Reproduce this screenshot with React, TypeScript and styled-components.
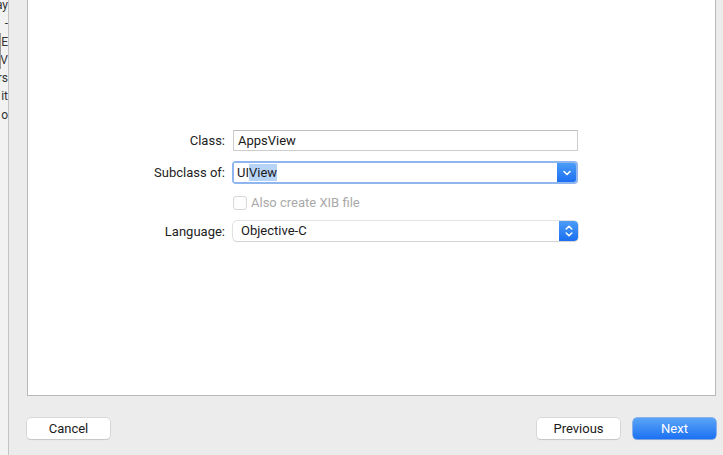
import React from "react";
import styled, { createGlobalStyle } from "styled-components";

const GlobalStyle = createGlobalStyle`
  html, body {
    margin: 0;
    padding: 0;
    background: #ececec;
    font-family: "Roboto", "Liberation Sans", sans-serif;
    font-size: 13px;
    color: #1e1e1e;
  }
`;

const Window = styled.div`
  display: flex;
  width: 723px;
  height: 455px;
  overflow: hidden;
  background: #ececec;
`;

const Sidebar = styled.div`
  width: 8px;
  flex-shrink: 0;
  background: #f2f2f2;
  border-right: 1px solid #c4c4c4;
  overflow: hidden;
`;

// the outline list is scrolled a few pixels past its top
const SideList = styled.div`
  display: flex;
  flex-direction: column;
  margin-top: -4px;
`;

const SideRow = styled.div<{ $boxed?: boolean }>`
  height: 18.3px;
  line-height: 18px;
  white-space: nowrap;
  direction: rtl;
  overflow: hidden;
  font-size: 12px;
  color: #333;
  border-left: ${(p) => (p.$boxed ? "1px solid #9a9a9a" : "none")};
`;

const Main = styled.div`
  flex: 1;
  display: flex;
  flex-direction: column;
  padding: 0 7px 0 18px;
`;

const Panel = styled.div`
  height: 396px;
  box-sizing: border-box;
  background: #ffffff;
  border: 1px solid #b9b9b9;
  border-top: none;
  padding-top: 130px;
`;

const Form = styled.div`
  display: grid;
  grid-template-columns: 197px 345px;
  column-gap: 8px;
  row-gap: 10px;
  align-items: center;
`;

const Label = styled.div`
  text-align: right;
  color: #222;
`;

const TextField = styled.div`
  height: 21px;
  box-sizing: border-box;
  border: 1px solid #cdcdcd;
  border-top-color: #bdbdbd;
  background: #fff;
  padding-left: 4px;
  line-height: 19px;
  color: #1a1a1a;
`;

const ComboRing = styled.div`
  height: 23px;
  margin-left: -1px;
  box-sizing: border-box;
  border-radius: 4px;
  background: #8fb6ef;
  padding: 2px;
  display: flex;
`;

const ComboField = styled.div`
  flex: 1;
  background: #fff;
  line-height: 19px;
  padding-left: 3px;
  color: #1a1a1a;
`;

const Selected = styled.span`
  background: #b7d4f7;
  padding: 1px 0;
`;

const BlueCap = styled.div<{ $w: number }>`
  width: ${(p) => p.$w}px;
  display: flex;
  align-items: center;
  justify-content: center;
  background: linear-gradient(#4b9cf8, #1b6ff1);
  border-radius: 0 3px 3px 0;
`;

const Checkline = styled.div`
  display: flex;
  align-items: center;
  gap: 4px;
  height: 17px;
  color: #a9a9a9;
`;

const Checkbox = styled.div`
  width: 12px;
  height: 12px;
  border: 1px solid #d6d6d6;
  border-radius: 3px;
  background: #fdfdfd;
`;

const Popup = styled.div`
  height: 20px;
  box-sizing: border-box;
  display: flex;
  border-radius: 4px;
  background: #fff;
  box-shadow: 0 0 0 0.5px #c6c6c6, 0 1px 1px rgba(0, 0, 0, 0.12);
  overflow: hidden;
`;

const PopupText = styled.div`
  flex: 1;
  padding-left: 8px;
  line-height: 20px;
  color: #1a1a1a;
`;

const Footer = styled.div`
  display: flex;
  align-items: center;
  padding-top: 22px;
  gap: 13px;
`;

const Spacer = styled.div`
  flex: 1;
`;

const Button = styled.div<{ $primary?: boolean }>`
  width: 83px;
  height: 21px;
  box-sizing: border-box;
  border-radius: 4px;
  display: flex;
  align-items: center;
  justify-content: center;
  font-size: 13px;
  color: ${(p) => (p.$primary ? "#fff" : "#1a1a1a")};
  background: ${(p) =>
    p.$primary ? "linear-gradient(#5aa5f8, #1c70f2)" : "#ffffff"};
  box-shadow: ${(p) =>
    p.$primary
      ? "0 0 0 0.5px #2a78e8, 0 1px 1px rgba(0,0,0,0.12)"
      : "0 0 0 0.5px #c4c4c4, 0 1px 1px rgba(0,0,0,0.14)"};
`;

const ChevronDown = () => (
  <svg width="10" height="8" viewBox="0 0 10 8">
    <path d="M2 2.5 L5 5.5 L8 2.5" fill="none" stroke="#fff" strokeWidth="1.6" strokeLinecap="round" strokeLinejoin="round" />
  </svg>
);

const Stepper = () => (
  <svg width="10" height="14" viewBox="0 0 10 14">
    <path d="M2.2 5 L5 2.2 L7.8 5" fill="none" stroke="#fff" strokeWidth="1.5" strokeLinecap="round" strokeLinejoin="round" />
    <path d="M2.2 9 L5 11.8 L7.8 9" fill="none" stroke="#fff" strokeWidth="1.5" strokeLinecap="round" strokeLinejoin="round" />
  </svg>
);

export default function App() {
  const sideItems: [string, boolean][] = [
    ["Display", false],
    ["-", false],
    ["E", true],
    ["V", true],
    ["rs", false],
    ["it", false],
    ["o", false],
  ];

  return (
    <>
      <GlobalStyle />
      <Window>
        <Sidebar>
          <SideList>
            {sideItems.map(([t, boxed], i) => (
              <SideRow key={i} $boxed={boxed}>
                {t}
              </SideRow>
            ))}
          </SideList>
        </Sidebar>
        <Main>
          <Panel>
            <Form>
              <Label>Class:</Label>
              <TextField>AppsView</TextField>

              <Label>Subclass of:</Label>
              <ComboRing>
                <ComboField>
                  UI<Selected>View</Selected>
                </ComboField>
                <BlueCap $w={19}>
                  <ChevronDown />
                </BlueCap>
              </ComboRing>

              <div />
              <Checkline>
                <Checkbox />
                Also create XIB file
              </Checkline>

              <Label>Language:</Label>
              <Popup>
                <PopupText>Objective-C</PopupText>
                <BlueCap $w={19}>
                  <Stepper />
                </BlueCap>
              </Popup>
            </Form>
          </Panel>
          <Footer>
            <Button>Cancel</Button>
            <Spacer />
            <Button>Previous</Button>
            <Button $primary>Next</Button>
          </Footer>
        </Main>
      </Window>
    </>
  );
}
